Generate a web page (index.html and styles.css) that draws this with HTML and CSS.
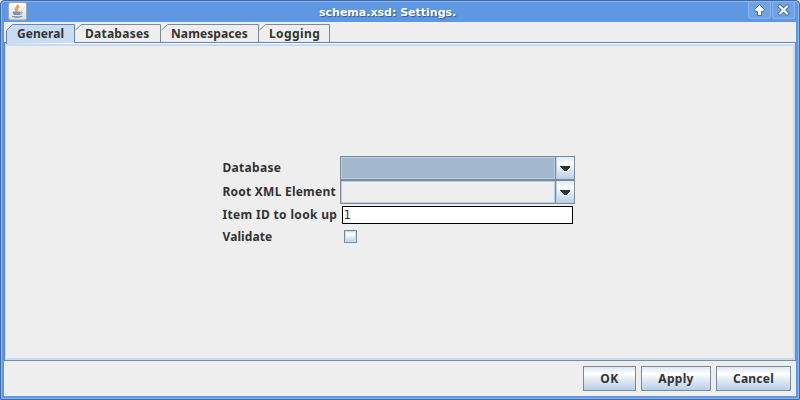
FILE: index.html
```
<!DOCTYPE html>
<html lang="en">
<head>
<meta charset="utf-8">
<title>schema.xsd: Settings.</title>
<link rel="stylesheet" href="styles.css">
</head>
<body>
<div class="window">
  <header class="titlebar">
    <svg class="app-icon" width="19" height="19" viewBox="0 0 19 19">
      <defs><linearGradient id="cup" x2="0" y2="1"><stop stop-color="#fff"/><stop offset="1" stop-color="#ddd"/></linearGradient></defs>
      <rect x=".5" y=".5" width="18" height="17.500" rx="2" fill="url(#cup)" stroke="#9aa8b5"/>
      <path d="M9.500 2.500c1.500 2-3 3-2 5 .3 1 1 1 1.500 2M11.500 4.500c-3 1.500-2.500 2.500-1.500 4" fill="none" stroke="#f0a050" stroke-width="1.700"/>
      <path d="M5 10h7v2.500H6zM4 14.200c2 1.400 8 1.400 10.500 0" fill="#7797b0" stroke="#7797b0"/>
      <path d="M12.500 10c2.500-.5 2.500 1.500 0 2.200" fill="none" stroke="#7797b0"/>
    </svg>
    <h1>schema.xsd: Settings.</h1>
    <div class="controls">
      <span class="control"><svg width="21" height="16" viewBox="0 0 21 16"><path d="M10.500 2.500l5 5-1 2h-2v4h-4v-4h-2l-1-2z" fill="#fff" stroke="#426da9"/></svg></span>
      <span class="control"><svg width="21" height="16" viewBox="0 0 21 16"><path d="M7 4.500l7 7M14 4.500l-7 7" stroke="#426da9" stroke-width="4" stroke-linecap="square"/><path d="M7 4.500l7 7M14 4.500l-7 7" stroke="#fff" stroke-width="2.200" stroke-linecap="square"/></svg></span>
    </div>
  </header>
  <main class="content">
    <nav class="tabs">
      <div class="tab selected general"><svg width="69" height="20"><path d="M.5 20V6.500l6-6h62V19" fill="#c8ddf2" stroke="#6382bf"/></svg><span>General</span></div>
      <div class="tab databases"><svg width="86" height="18"><path d="M.5 6L6.500.5H85.500V18" fill="none" stroke="#7a8a99"/></svg><span>Databases</span></div>
      <div class="tab namespaces"><svg width="98" height="18"><path d="M.5 6L6.500.5H97.500V18" fill="none" stroke="#7a8a99"/></svg><span>Namespaces</span></div>
      <div class="tab logging"><svg width="71" height="18"><path d="M.5 6L6.500.5H70.500V18" fill="none" stroke="#7a8a99"/></svg><span>Logging</span></div>
    </nav>
    <section class="panel">
      <div class="panel-body">
        <form class="form">
          <label class="l-db">Database</label>
          <div class="combo focused"><div class="value"></div><div class="arrow"><svg width="10" height="5" shape-rendering="crispEdges"><path d="M0 0h10v1L6 5H4L0 1z" fill="#333"/></svg></div></div>
          <label class="l-root">Root XML Element</label>
          <div class="combo"><div class="value"></div><div class="arrow"><svg width="10" height="5" shape-rendering="crispEdges"><path d="M0 0h10v1L6 5H4L0 1z" fill="#333"/></svg></div></div>
          <label class="l-item">Item ID to look up</label>
          <div class="field">1</div>
          <label class="l-val">Validate</label>
          <div class="check"></div>
        </form>
      </div>
    </section>
    <footer class="actions">
      <div class="button ok"><span>OK</span></div>
      <div class="button apply"><span>Apply</span></div>
      <div class="button cancel"><span>Cancel</span></div>
    </footer>
  </main>
</div>
</body>
</html>
```
FILE: styles.css
```
* { box-sizing: border-box; }
body {
  margin: 0;
  background: #fff;
  color: #333;
  font: bold 12px/16px "Noto Sans", sans-serif;
  letter-spacing: 0.3px;
}
svg { display: block; }
.window {
  width: 800px;
  height: 400px;
  border: 1px solid #426ca8;
  border-radius: 4px 4px 0 0;
  background: #5e97e2;
  box-shadow: inset 0 0 0 1px #8bb5ee;
  padding: 0 3px 3px;
  overflow: hidden;
}
.titlebar { height: 21px; display: flex; padding: 1px 1px 0 4px; }
.titlebar h1 {
  flex: 1;
  margin: 2px 0 0 292px;
  font: bold 11px/18px "DejaVu Sans", sans-serif;
  letter-spacing: 0;
  color: #fff;
  text-shadow: 1px 1px 1px #315a96;
}
.controls { display: flex; gap: 1px; }
.control {
  width: 23px;
  height: 17px;
  border: 1px solid #8bb5ee;
  border-top: 0;
  border-radius: 0 0 3px 3px;
  background: #6fa3e6;
}
.content { height: 374px; background: #eee; padding-top: 2px; }
.tabs { display: flex; height: 18px; padding-left: 2px; }
.tab { position: relative; height: 18px; }
.tab svg { position: absolute; left: 0; top: 0; }
.tab span { position: relative; display: block; padding: 2px 0 0 10px; white-space: nowrap; }
.tab.general { width: 69px; z-index: 1; letter-spacing: 0.05px; }
.general span { padding-left: 11px; }
.databases { width: 86px; letter-spacing: 0.25px; }
.namespaces { width: 98px; letter-spacing: 0.1px; }
.logging { width: 71px; letter-spacing: 0.4px; }
.panel {
  height: 319px;
  border: 1px solid #7a8a99;
  border-top-color: #6382bf;
  border-left-color: #6382bf;
  padding-top: 1px;
  background: #fff;
}
.panel-body {
  height: 316px;
  border: 2px solid #c8ddf2;
  border-left-width: 1px;
  background: #eee;
  display: flex;
  justify-content: center;
  padding: 110px 2px 0 0;
}
.form {
  display: grid;
  grid-template-columns: 117px 235px;
  grid-template-rows: 24px 24px 22px 22px;
  height: 92px;
  align-items: center;
}
.form label { white-space: nowrap; }
.l-root { letter-spacing: 0.23px; }
.l-item { letter-spacing: 0.33px; }
.l-val { letter-spacing: 0.1px; }
.combo { display: flex; height: 24px; border: 1px solid #7a8a99; }
.value { flex: 1; border: 1px solid #b8cfe5; }
.focused .value { background: #a3b8ce; }
.arrow {
  width: 19px;
  border-left: 1px solid #7a8a99;
  box-shadow: inset 1px 0 #b8cfe5;
  background: linear-gradient(#dde8f3, #fff 30%, #dde8f3 60%, #b8cfe5);
  display: flex;
  align-items: center;
  justify-content: center;
}
.field {
  margin: -1px 0 0 2px;
  width: 231px;
  height: 18px;
  border: 1px solid #000;
  background: #fff;
  padding-left: 1px;
  font: 12px/17px "DejaVu Sans", sans-serif;
}
.check {
  width: 13px;
  height: 13px;
  margin: -2px 0 0 4px;
  border: 1px solid #7a8a99;
  background: linear-gradient(#dde8f3, #fff 30%, #b8cfe5);
  box-shadow: inset 0 0 0 1px #c8ddf2;
}
.actions { display: flex; justify-content: flex-end; gap: 5px; padding: 5px 5px 0 0; }
.button {
  height: 25px;
  border: 1px solid #7a8a99;
  background: linear-gradient(#dde8f3, #fff 30%, #dde8f3 60%, #b8cfe5);
  text-align: center;
  line-height: 23px;
}
.ok { width: 53px; letter-spacing: 0.6px; }
.apply { width: 70px; }
.cancel { width: 75px; letter-spacing: 0.2px; }
```
